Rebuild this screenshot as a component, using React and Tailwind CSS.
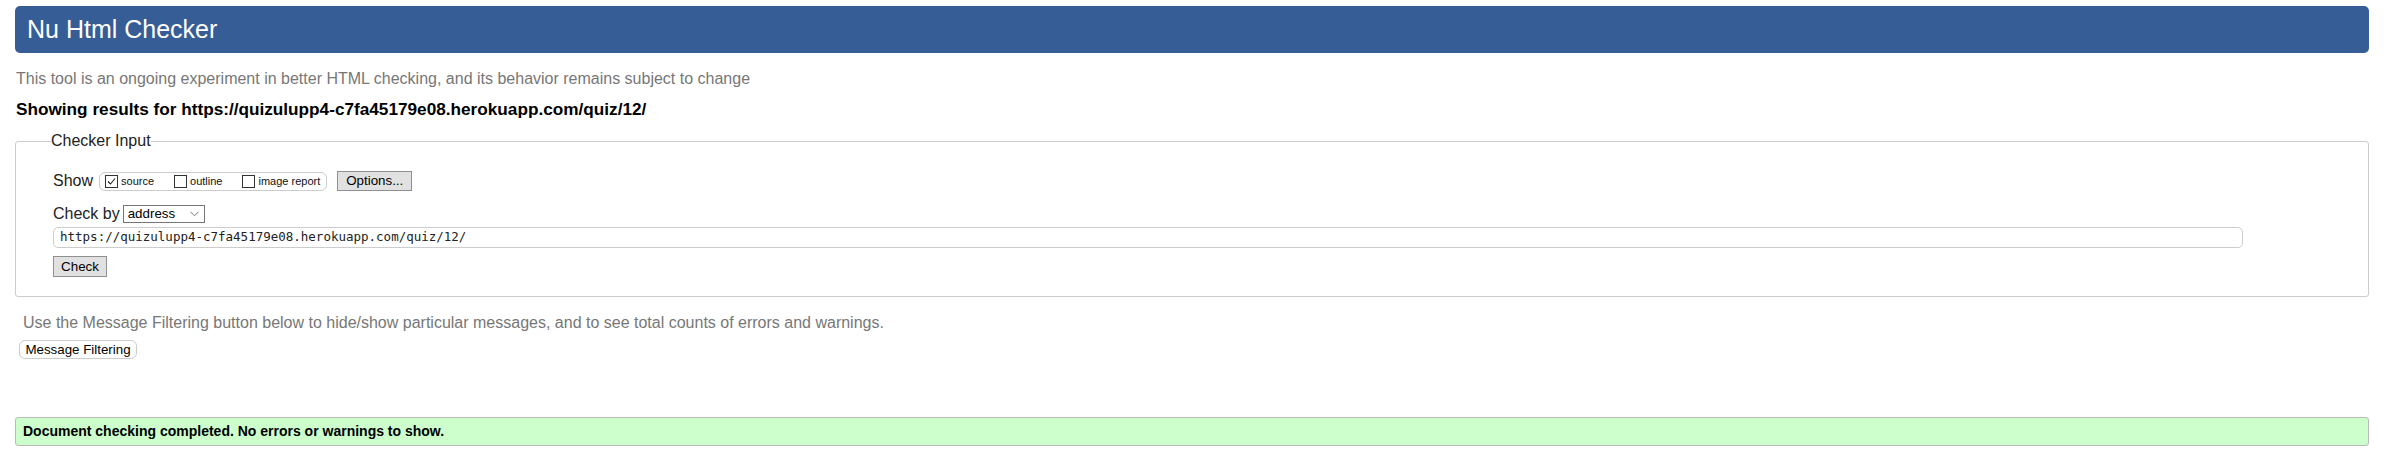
import React from "react";

function Box({ checked }) {
  return (
    <span className="w-[13px] h-[13px] border border-[#333] bg-white flex items-center justify-center shrink-0">
      {checked && (
        <svg width="11" height="11" viewBox="0 0 11 11">
          <path d="M2 5.5 L4.5 8 L9 2.5" fill="none" stroke="#222" strokeWidth="1.1" />
        </svg>
      )}
    </span>
  );
}

function Opt({ label, checked }) {
  return (
    <label className="flex items-center gap-[3px]">
      <Box checked={checked} />
      <span className="text-[11px] leading-[13px] text-[#111]">{label}</span>
    </label>
  );
}

export default function App() {
  const url = "https://quizulupp4-c7fa45179e08.herokuapp.com/quiz/12/";

  return (
    <div className="w-[2397px] h-[456px] bg-white overflow-hidden font-['Liberation_Sans',Arial,sans-serif] text-[#222]">
      <div className="ml-[15px] w-[2354px] pt-[6px]">
        <h1 className="h-[47px] rounded-[5px] bg-[#365d95] pl-[12px] flex items-center text-[25px] leading-none font-normal text-white">
          Nu Html Checker
        </h1>

        <p className="mt-[17px] ml-[1px] text-[16px] leading-[18px] text-[#777]">
          This tool is an ongoing experiment in better HTML checking, and its behavior remains subject to change
        </p>
        <p className="mt-[11px] ml-[1px] text-[17.2px] leading-[20px] font-bold text-black">
          Showing results for {url}
        </p>

        <fieldset className="mt-[12px] min-w-0 border border-[#ccc] rounded-[3px] pl-[37px] pt-0 pb-[19px] pr-0">
          <legend className="-ml-[2px] px-0 text-[16px] leading-[20px] text-[#222]">Checker Input</legend>

          <div className="mt-[20px] h-[20px] flex items-center">
            <span className="text-[16px] leading-[18px]">Show</span>
            <div className="ml-[6px] h-[19px] flex items-center gap-[20px] border border-[#ccc] rounded-[6px] pl-[5px] pr-[6px]">
              <Opt label="source" checked />
              <Opt label="outline" />
              <Opt label="image report" />
            </div>
            <button className="ml-[10px] w-[75px] h-[20px] border border-[#8f8f8f] bg-[#e1e1e1] text-[13.33px] leading-none text-black">
              Options...
            </button>
          </div>

          <div className="mt-[14px] h-[18px] flex items-center">
            <span className="text-[16px] leading-[18px]">Check by</span>
            <div className="ml-[3px] w-[82px] h-[18px] border border-[#767676] bg-white flex items-center justify-between pl-[4px] pr-[5px] text-[13.33px] text-black">
              <span>address</span>
              <svg width="9" height="6" viewBox="0 0 9 6">
                <path d="M0.5 0.8 L4.5 4.8 L8.5 0.8" fill="none" stroke="#777" strokeWidth="1" />
              </svg>
            </div>
          </div>

          <div className="mt-[4px] w-[2190px] h-[21px] border border-[#ccc] rounded-[5px] bg-white pl-[6px] flex items-center font-['DejaVu_Sans_Mono',monospace] text-[12.5px] text-[#222]">
            {url}
          </div>

          <button className="mt-[8px] w-[54px] h-[21px] border border-[#8f8f8f] bg-[#e1e1e1] text-[13.33px] leading-none text-black block">
            Check
          </button>
        </fieldset>

        <p className="mt-[17px] ml-[8px] text-[16px] leading-[18px] text-[#777]">
          Use the Message Filtering button below to hide/show particular messages, and to see total counts of errors and warnings.
        </p>
        <button className="mt-[8px] ml-[4px] w-[118px] h-[19px] border border-[#ccc] rounded-[6px] bg-white text-[13.33px] leading-none text-black block">
          Message Filtering
        </button>

        <div className="mt-[58px] h-[29px] border border-[#bbb] rounded-[3px] bg-[#ccffcc] pl-[7px] flex items-center text-[14px] font-bold text-black">
          Document checking completed. No errors or warnings to show.
        </div>
      </div>
    </div>
  );
}
